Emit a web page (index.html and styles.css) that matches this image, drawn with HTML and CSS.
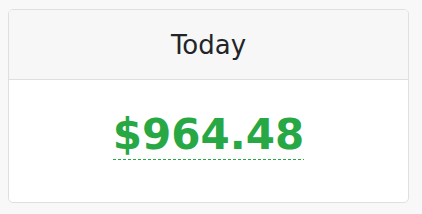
FILE: index.html
```html
<!DOCTYPE html>
<html lang="en">
  <head>
    <meta charset="UTF-8" />
    <meta name="viewport" content="width=device-width, initial-scale=1.0" />
    <title>Today</title>
    <link rel="stylesheet" href="styles.css">
  </head>
  <body>
    <div class="card">
      <div class="card-header">Today</div>
      <div class="card-body">
        <span class="amount" title="Total for today">$964.48</span>
      </div>
    </div>
  </body>
</html>
```

FILE: styles.css
```css
body {
  margin: 9px 0 0 8px;
  padding: 0;
  background-color: #f8f8f8;
  font-family: "DejaVu Sans", Verdana, sans-serif;
  color: #212529;
}

.card {
  width: 399px;
  border: 1px solid #dfdfdf;
  border-radius: 5px;
  background-color: #fff;
  overflow: hidden;
}

.card-header {
  background-color: #f7f7f7;
  border-bottom: 1px solid #dfdfdf;
  text-align: center;
  font-size: 26px;
  line-height: 36px;
  padding: 17px 0 16px;
}

.card-body {
  display: flex;
  justify-content: center;
  padding: 34px 0 42px;
}

/* dashed green underline, drawn as a background so the dash size is fixed */
.amount {
  font-size: 42px;
  font-weight: bold;
  line-height: 1;
  color: #28a745;
  padding-bottom: 4px;
  background-image: repeating-linear-gradient(to right, #28a745 0 3px, transparent 3px 5px);
  background-size: 100% 1px;
  background-position: left bottom;
  background-repeat: no-repeat;
}
```
